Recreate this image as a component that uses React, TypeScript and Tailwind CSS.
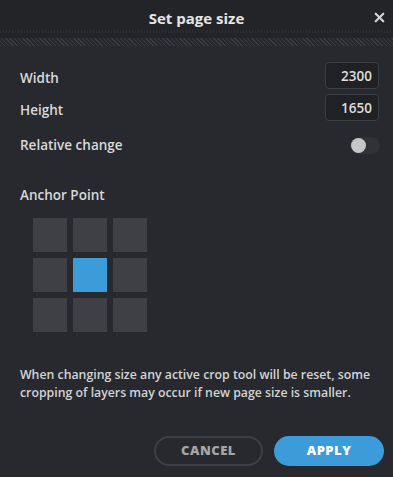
import { X } from "lucide-react";

const cells = [0, 1, 2, 3, 4, 5, 6, 7, 8];

export default function App() {
  return (
    <div
      className="flex h-[477px] w-[393px] flex-col bg-[#27292e] text-[#d9d9d9]"
      style={{ fontFamily: '"Open Sans", "Noto Sans", sans-serif' }}
    >
      {/* header */}
      <div className="relative flex h-[30px] items-center justify-center bg-[#222428] pt-[6px]">
        <h1 className="text-[15px] font-bold text-[#e6e6e6]">Set page size</h1>
        <button className="absolute right-[6px] top-[10px] text-[#d4d4d4]">
          <X className="h-[15px] w-[15px]" strokeWidth={3.5} />
        </button>
      </div>
      <div className="h-[3px] bg-[#222428] bg-[repeating-linear-gradient(90deg,#2e3035_0px,#2e3035_1px,transparent_1px,transparent_3px)]" />
      <div className="h-[5px] bg-[#222428]" />
      <div className="h-[8px] bg-[#26282c] bg-[repeating-linear-gradient(45deg,#3a3c41_0px,#3a3c41_1px,transparent_1px,transparent_3px)]" />

      {/* body */}
      <div className="flex flex-1 flex-col pl-5 pr-[14px] pt-[16px]">
        <div className="flex items-center justify-between">
          <span className="pt-[6px] text-[13.5px] font-semibold">Width</span>
          <input
            readOnly
            value="2300"
            className="h-[27px] w-[54px] rounded-[4px] border border-[#3c3f44] bg-[#1f2125] px-[6px] text-right text-[13.5px] font-semibold text-[#dedede] outline-none"
          />
        </div>
        <div className="mt-[5px] flex items-center justify-between">
          <span className="pt-[5px] text-[13.5px] font-semibold">Height</span>
          <input
            readOnly
            value="1650"
            className="h-[27px] w-[54px] rounded-[4px] border border-[#3c3f44] bg-[#1f2125] px-[6px] text-right text-[13.5px] font-semibold text-[#dedede] outline-none"
          />
        </div>
        <div className="mt-[14px] flex items-center justify-between">
          <span className="text-[13.5px] font-semibold">Relative change</span>
          <div className="mr-[-1px] flex h-[17px] w-[30px] items-center rounded-full bg-[#303237] px-[1px]">
            <div className="h-[15px] w-[15px] rounded-full bg-[#c6c6c6]" />
          </div>
        </div>

        <div className="mt-[30px] text-[13.5px] font-semibold">Anchor Point</div>
        <div className="ml-[13px] mt-[12px] grid w-fit grid-cols-[34px_34px_34px] gap-[6px]">
          {cells.map((i) => (
            <div
              key={i}
              className={
                i === 4
                  ? "h-[34px] w-[34px] bg-[#3b9cd9]"
                  : "h-[34px] w-[34px] bg-[#3e4045]"
              }
            />
          ))}
        </div>

        <p className="mt-[34px] text-[12.3px] font-semibold leading-[18px] text-[#d4d4d4]">
          When changing size any active crop tool will be reset, some cropping of layers may occur if
          new page size is smaller.
        </p>

        <div className="mr-[-5px] mt-[34px] flex justify-end gap-[11px]">
          <button className="h-[30px] w-[109px] rounded-full border-2 border-[#3d4045] text-[13px] font-extrabold tracking-[0.5px] text-[#a6a6a6]">
            CANCEL
          </button>
          <button className="h-[30px] w-[110px] rounded-full bg-[#3b9cd9] text-[13px] font-extrabold tracking-[0.5px] text-white">
            APPLY
          </button>
        </div>
      </div>
    </div>
  );
}
